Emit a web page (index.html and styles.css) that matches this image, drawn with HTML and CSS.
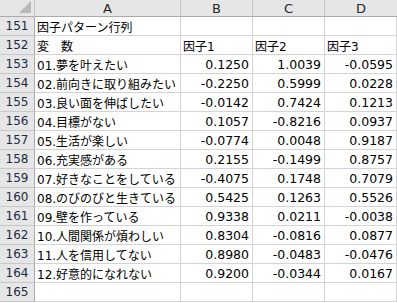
FILE: index.html
```html
<!DOCTYPE html>
<html lang="ja">
<head>
<meta charset="utf-8">
<link rel="stylesheet" href="styles.css">
</head>
<body>
<div class="sheet">
  <div class="corner"></div>
  <div class="colhdr">A</div>
  <div class="colhdr">B</div>
  <div class="colhdr">C</div>
  <div class="colhdr last">D</div>

  <div class="rowhdr">151</div><div class="cell txt">因子パターン行列</div><div class="cell"></div><div class="cell"></div><div class="cell"></div>
  <div class="rowhdr">152</div><div class="cell txt">変　数</div><div class="cell txt">因子1</div><div class="cell txt">因子2</div><div class="cell txt">因子3</div>
  <div class="rowhdr">153</div><div class="cell txt">01.夢を叶えたい</div><div class="cell num">0.1250</div><div class="cell num">1.0039</div><div class="cell num">-0.0595</div>
  <div class="rowhdr">154</div><div class="cell txt">02.前向きに取り組みたい</div><div class="cell num">-0.2250</div><div class="cell num">0.5999</div><div class="cell num">0.0228</div>
  <div class="rowhdr">155</div><div class="cell txt">03.良い面を伸ばしたい</div><div class="cell num">-0.0142</div><div class="cell num">0.7424</div><div class="cell num">0.1213</div>
  <div class="rowhdr">156</div><div class="cell txt">04.目標がない</div><div class="cell num">0.1057</div><div class="cell num">-0.8216</div><div class="cell num">0.0937</div>
  <div class="rowhdr">157</div><div class="cell txt">05.生活が楽しい</div><div class="cell num">-0.0774</div><div class="cell num">0.0048</div><div class="cell num">0.9187</div>
  <div class="rowhdr">158</div><div class="cell txt">06.充実感がある</div><div class="cell num">0.2155</div><div class="cell num">-0.1499</div><div class="cell num">0.8757</div>
  <div class="rowhdr">159</div><div class="cell txt">07.好きなことをしている</div><div class="cell num">-0.4075</div><div class="cell num">0.1748</div><div class="cell num">0.7079</div>
  <div class="rowhdr">160</div><div class="cell txt">08.のびのびと生きている</div><div class="cell num">0.5425</div><div class="cell num">0.1263</div><div class="cell num">0.5526</div>
  <div class="rowhdr">161</div><div class="cell txt">09.壁を作っている</div><div class="cell num">0.9338</div><div class="cell num">0.0211</div><div class="cell num">-0.0038</div>
  <div class="rowhdr">162</div><div class="cell txt">10.人間関係が煩わしい</div><div class="cell num">0.8304</div><div class="cell num">-0.0816</div><div class="cell num">0.0877</div>
  <div class="rowhdr">163</div><div class="cell txt">11.人を信用してない</div><div class="cell num">0.8980</div><div class="cell num">-0.0483</div><div class="cell num">-0.0476</div>
  <div class="rowhdr">164</div><div class="cell txt">12.好意的になれない</div><div class="cell num">0.9200</div><div class="cell num">-0.0344</div><div class="cell num">0.0167</div>
  <div class="rowhdr">165</div><div class="cell"></div><div class="cell"></div><div class="cell"></div><div class="cell"></div>
</div>
</body>
</html>
```
FILE: styles.css
```css
html, body {
  margin: 0;
  padding: 0;
  background: #ffffff;
}
body {
  overflow: hidden;
}
.sheet {
  display: grid;
  grid-template-columns: 35px 146px 72px 72px 72px;
  grid-template-rows: 17px repeat(15, 19px);
  width: 397px;
  font-family: "DejaVu Sans", "Noto Sans CJK JP", sans-serif;
  font-size: 12.5px;
  color: #000;
}
.sheet > div {
  box-sizing: border-box;
  white-space: nowrap;
  overflow: visible;
  display: flex;
  align-items: center;
}
.corner {
  position: relative;
  background: #e6e6e6;
  border-right: 1px solid #c8c8c8;
  border-bottom: 1px solid #ababab;
}
.corner::after {
  content: "";
  position: absolute;
  right: 3px;
  bottom: 3px;
  width: 12px;
  height: 12px;
  background: #b8b8b8;
  clip-path: polygon(100% 0, 100% 100%, 0 100%);
}
.colhdr {
  background: #e6e6e6;
  border-right: 1px solid #c8c8c8;
  border-bottom: 1px solid #ababab;
  justify-content: center;
  font-family: "DejaVu Sans", sans-serif;
  font-size: 13px;
  color: #262626;
  padding-top: 1px;
}
.colhdr.last {
  border-right: none;
}
.rowhdr {
  background: #e6e6e6;
  border-right: 1px solid #ababab;
  border-bottom: 1px solid #c8c8c8;
  justify-content: center;
  font-family: "DejaVu Sans", sans-serif;
  font-size: 12px;
  color: #1c2a45;
}
.cell {
  border-right: 1px solid #d4d4d4;
  border-bottom: 1px solid #d4d4d4;
}
.txt {
  padding-left: 2px;
  font-size: 12px;
  font-family: "DejaVu Sans", "Noto Sans CJK JP", sans-serif;
}
.num {
  justify-content: flex-end;
  padding-right: 3px;
}
```
